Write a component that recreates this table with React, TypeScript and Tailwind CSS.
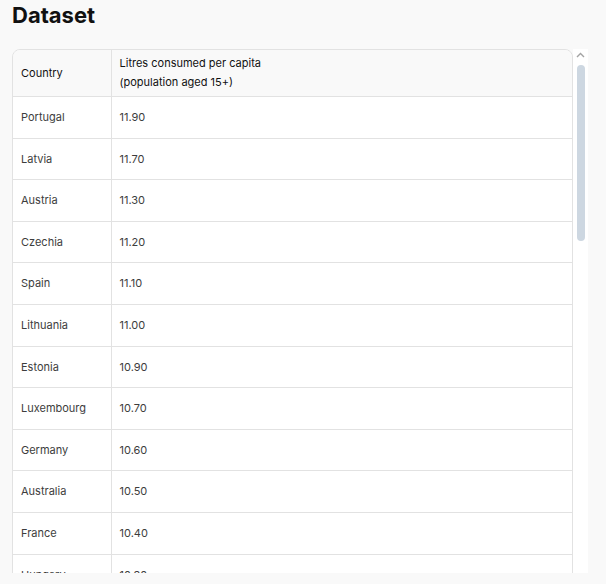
const rows: [string, string][] = [
  ["Portugal", "11.90"],
  ["Latvia", "11.70"],
  ["Austria", "11.30"],
  ["Czechia", "11.20"],
  ["Spain", "11.10"],
  ["Lithuania", "11.00"],
  ["Estonia", "10.90"],
  ["Luxembourg", "10.70"],
  ["Germany", "10.60"],
  ["Australia", "10.50"],
  ["France", "10.40"],
  ["Hungary", "10.30"],
  ["Ireland", "10.20"],
  ["Poland", "10.10"],
  ["Slovenia", "10.00"],
  ["Belgium", "9.90"],
  ["Denmark", "9.80"],
  ["Slovakia", "9.70"],
  ["Switzerland", "9.60"],
  ["Greece", "9.50"],
];

export default function App() {
  return (
    <div className="min-h-[584px] bg-[#f9f9f9] px-3 font-['Inter',sans-serif]">
      <h1 className="pt-[1px] text-[22px] font-bold leading-[28px] text-[#111]">Dataset</h1>
      <div className="mt-[20px] flex h-[524px] w-[576px]">
        {/* table viewport */}
        <div className="w-[561px] overflow-hidden">
          <div className="overflow-hidden rounded-t-lg border border-[#e2e2e2]">
            <table className="w-full border-collapse text-left text-[11px]">
              <thead>
                <tr className="bg-[#f9f9f9] text-[#111]">
                  <th className="w-[98px] border-r border-b border-[#e2e2e2] px-2 font-normal leading-[19px]">
                    Country
                  </th>
                  <th className="h-[45px] border-b border-[#e2e2e2] px-2 py-1 font-normal leading-[19px]">
                    Litres consumed per capita
                    <br />
                    (population aged 15+)
                  </th>
                </tr>
              </thead>
              <tbody className="bg-white text-[#3d3d3d]">
                {rows.map(([country, value]) => (
                  <tr key={country} className="h-[41.6px] border-b border-[#e2e2e2]">
                    <td className="border-r border-[#e2e2e2] px-2">{country}</td>
                    <td className="px-2">{value}</td>
                  </tr>
                ))}
              </tbody>
            </table>
          </div>
        </div>
        {/* scrollbar */}
        <div className="flex w-[15px] flex-col items-center bg-white">
          <svg width="9" height="6" viewBox="0 0 9 6" className="mt-[3px]">
            <path d="M1 5 L4.5 1.5 L8 5" fill="none" stroke="#a3a3a3" strokeWidth="1.4" />
          </svg>
          <div className="mt-[7px] h-[176px] w-[8px] rounded-full bg-[#cdd7e1]" />
        </div>
      </div>
    </div>
  );
}
